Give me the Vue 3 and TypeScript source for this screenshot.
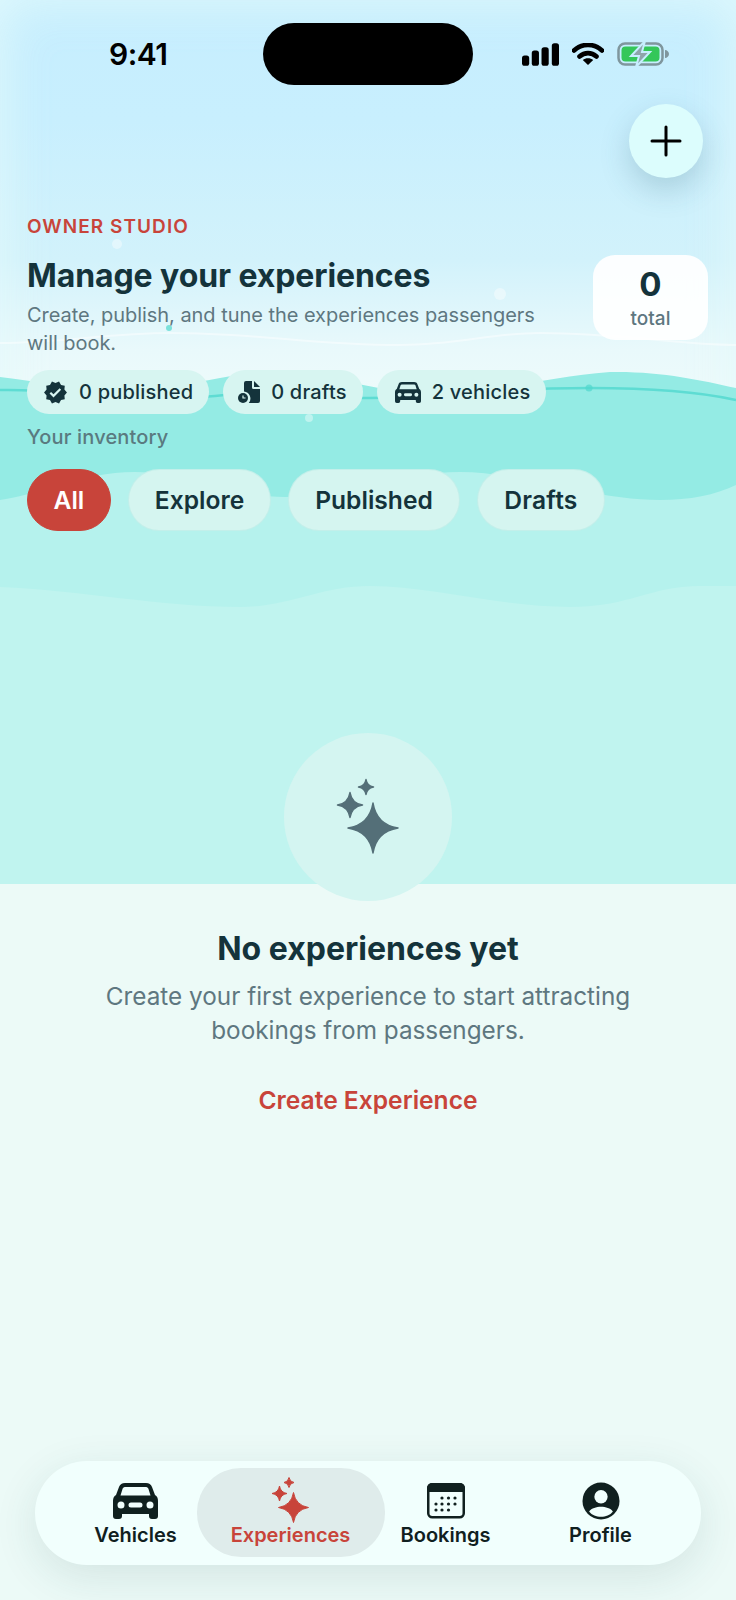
<script setup lang="ts">
interface Chip {
  label: string;
  icon: string;
}

interface Tab {
  label: string;
  icon: string;
  active?: boolean;
}

const chips: Chip[] = [
  { label: '0 published', icon: 'verified' },
  { label: '0 drafts', icon: 'draft' },
  { label: '2 vehicles', icon: 'car' },
];

const filters = ['All', 'Explore', 'Published', 'Drafts'];

const tabs: Tab[] = [
  { label: 'Vehicles', icon: 'car' },
  { label: 'Experiences', icon: 'sparkles', active: true },
  { label: 'Bookings', icon: 'calendar' },
  { label: 'Profile', icon: 'profile' },
];

const calendarDots: number[][] = [
  [15, 15], [21.5, 15], [28, 15],
  [9, 21], [15, 21], [21.5, 21], [28, 21],
  [9, 27], [15, 27], [21.5, 27],
];

// four pointed star with concave sides
const star = (cx: number, cy: number, r: number): string => {
  const k = r * 0.14;
  return `M${cx} ${cy - r}Q${cx + k} ${cy - k} ${cx + r} ${cy}Q${cx + k} ${cy + k} ${cx} ${cy + r}Q${cx - k} ${cy + k} ${cx - r} ${cy}Q${cx - k} ${cy - k} ${cx} ${cy - r}Z`;
};

const carBody = 'M12 0H33C36 0 38 1.5 39 4L42 12C44 13 45 15 45 18V33a3 3 0 0 1-3 3H39a3 3 0 0 1-3-3V31H9v2a3 3 0 0 1-3 3H3a3 3 0 0 1-3-3V18C0 15 1 13 3 12L6 4C7 1.5 9 0 12 0ZM13 4C11 4 10 4.5 9.5 6L7.5 12.500H37.500L35.500 6C35 4.500 34 4 32 4ZM8 18.500a3.500 3.500 0 1 0 0 7a3.500 3.500 0 1 0 0-7ZM37 18.500a3.500 3.500 0 1 0 0 7a3.500 3.500 0 1 0 0-7ZM18 19.500a2.500 2.500 0 0 0 0 5H27a2.500 2.500 0 0 0 0-5Z';
</script>

<template>
  <div class="page">
    <div class="hero-bg">
      <div class="sky"></div>
      <svg class="waves" viewBox="0 0 736 884" width="736" height="884">
        <path class="wave-a" d="M0 377C60 385 130 396 220 378C270 368 330 378 400 392C470 402 530 378 610 372C660 371 700 380 736 388V884H0Z" />
        <path class="wave-b" d="M0 500C40 495 80 472 135 472C190 472 230 497 285 497C340 497 400 472 460 472C520 472 590 500 660 500C690 500 715 495 736 485V884H0Z" />
        <path class="wave-c" d="M0 587C80 590 160 607 240 607C290 607 320 586 370 586C430 586 500 607 570 607C630 607 650 586 700 586C715 586 725 586 736 586V884H0Z" />
        <path class="line-white" d="M0 343C60 343 110 333 170 333C260 333 310 345 400 345C460 345 490 333 540 333C620 333 680 345 736 345" />
        <path class="line-teal" d="M0 390C60 388 130 404 215 396C270 390 320 398 370 398C430 398 480 388 590 388C650 388 700 392 736 400" />
        <circle class="dot" cx="117" cy="244" r="5" />
        <circle class="dot" cx="500" cy="294" r="6" />
        <circle class="dot" cx="309" cy="418" r="4" />
        <circle class="dot-teal" cx="169" cy="328" r="3" />
        <circle class="dot-teal" cx="589" cy="388" r="3.5" />
      </svg>
    </div>

    <div class="content">
      <div class="status-bar">
        <span class="time">9:41</span>
        <div class="island"></div>
        <div class="status-icons">
          <svg width="37" height="23" viewBox="0 0 36 22">
            <rect x="0" y="12" width="7" height="10" rx="2.5" />
            <rect x="9.5" y="7" width="7" height="15" rx="2.5" />
            <rect x="19" y="4" width="7" height="18" rx="2.5" />
            <rect x="29" y="0" width="7" height="22" rx="2.5" />
          </svg>
          <svg width="32" height="22" viewBox="0 0 32 22">
            <path d="M2 7.5C10 0 22 0 30 7.5M7.500 13.500C12.500 9 19.500 9 24.500 13.500" fill="none" stroke="#000" stroke-width="4.6" stroke-linecap="round" />
            <path d="M16 22L10.800 17C13.500 14.800 18.500 14.800 21.200 17Z" />
          </svg>
          <svg width="52" height="24" viewBox="0 0 52 24">
            <rect x="1.5" y="1.5" width="44" height="21" rx="6.5" fill="none" stroke="#7f969d" stroke-width="2.5" />
            <path d="M48 8v8c2 0 4-2 4-4s-2-4-4-4z" fill="#7f969d" />
            <rect x="4.5" y="4.5" width="38" height="15" rx="4" fill="#34c759" />
            <path d="M28 -1L14 14H22L19 25L33 10H25Z" fill="#8ea4ab" stroke="#c6eefe" stroke-width="2" />
          </svg>
        </div>
      </div>

      <div class="fab-row">
        <button class="fab">
          <svg width="32" height="32" viewBox="0 0 32 32">
            <path d="M16 2V30M2 16H30" stroke="#000" stroke-width="3" stroke-linecap="round" />
          </svg>
        </button>
      </div>

      <div class="header">
        <div class="eyebrow">OWNER STUDIO</div>
        <div class="title-row">
          <div class="title-text">
            <h1>Manage your experiences</h1>
            <p>Create, publish, and tune the experiences passengers will book.</p>
          </div>
          <div class="total-card">
            <strong>0</strong>
            <span>total</span>
          </div>
        </div>

        <div class="chips">
          <div class="chip" v-for="chip of chips" :key="chip.label">
            <svg v-if="chip.icon === 'verified'" width="25" height="25" viewBox="0 0 24 24">
              <path d="M23 12l-2.44-2.79.34-3.69-3.61-.82-1.89-3.2L12 2.96 8.6 1.5 6.71 4.69 3.1 5.5l.34 3.7L1 12l2.44 2.79-.34 3.7 3.61.82L8.6 22.5l3.4-1.47 3.4 1.46 1.89-3.19 3.61-.82-.34-3.69L23 12zm-12.91 4.72l-3.8-3.81 1.48-1.48 2.32 2.33 5.85-5.87 1.48 1.48-7.33 7.35z" />
            </svg>
            <svg v-else-if="chip.icon === 'draft'" class="icon-draft" width="22" height="22" viewBox="0 0 22 22">
              <path d="M8 0h6v6.500a1.500 1.500 0 0 0 1.500 1.500H22v12a2 2 0 0 1-2 2H10.800A7 7 0 0 0 6 10.600V2a2 2 0 0 1 2-2z" />
              <path d="M16 0l6 6h-6z" />
              <circle cx="5" cy="17" r="5" />
              <path d="M5 14.500V17H7.500" fill="none" stroke="#d7f5f1" stroke-width="1.2" />
            </svg>
            <svg v-else class="icon-car" width="26" height="21" viewBox="0 0 45 36">
              <path :d="carBody" fill-rule="evenodd" />
            </svg>
            <span>{{ chip.label }}</span>
          </div>
        </div>

        <div class="inventory">Your inventory</div>

        <div class="filters">
          <div class="filter" :class="{ active: filter === 'All' }" v-for="filter of filters" :key="filter">
            {{ filter }}
          </div>
        </div>
      </div>

      <div class="empty">
        <div class="empty-circle">
          <svg width="168" height="168" viewBox="0 0 168 168">
            <path :d="star(89, 95, 25)" />
            <path :d="star(66, 72, 12.500)" />
            <path :d="star(82, 54, 7.500)" />
          </svg>
        </div>
        <h2>No experiences yet</h2>
        <p>Create your first experience to start attracting bookings from passengers.</p>
        <div class="create">Create Experience</div>
      </div>
    </div>

    <nav class="tabbar">
      <div class="tab" :class="{ active: tab.active }" v-for="tab of tabs" :key="tab.label">
        <svg v-if="tab.icon === 'car'" width="45" height="36" viewBox="0 0 45 36">
          <path :d="carBody" fill-rule="evenodd" />
        </svg>
        <svg v-else-if="tab.icon === 'sparkles'" width="45" height="36" viewBox="0 0 45 36">
          <path :d="star(25.500, 24.500, 15)" />
          <path :d="star(11.500, 10.500, 7.500)" />
          <path :d="star(21, -0.500, 5)" />
        </svg>
        <svg v-else-if="tab.icon === 'calendar'" width="38" height="36" viewBox="0 0 38 36">
          <rect x="1.25" y="1.25" width="35.500" height="33" rx="4" fill="#f1fffd" stroke="#10201f" stroke-width="2.5" />
          <path d="M5 0H33a5 5 0 0 1 5 5V9H0V5a5 5 0 0 1 5-5Z" />
          <circle v-for="dot of calendarDots" :key="dot.join()" :cx="dot[0]" :cy="dot[1]" r="1.6" />
        </svg>
        <svg v-else width="40" height="40" viewBox="0 0 40 40">
          <circle cx="20" cy="20" r="19.500" />
          <circle cx="20" cy="15.500" r="7" fill="#f1fffd" />
          <path d="M7.500 31C10 27.500 15 26 20 26C25 26 30 27.500 32.500 31C29.500 35 25 36.500 20 36.500C15 36.500 10.500 35 7.500 31Z" fill="#f1fffd" />
        </svg>
        <span>{{ tab.label }}</span>
      </div>
    </nav>
  </div>
</template>

<style scoped>
.page {
  position: relative;
  width: 736px;
  height: 1600px;
  overflow: hidden;
  background-color: #ecfaf7;
  font-family: Inter, "Liberation Sans", sans-serif;
  color: #14333b;
}

.hero-bg {
  position: absolute;
  top: 0;
  left: 0;
  width: 736px;
  height: 884px;
  overflow: hidden;
}

.sky {
  position: absolute;
  inset: 0 0 -80px 0;
  background: linear-gradient(180deg, #c6eefe 0, #c8effe 120px, #d2f2fb 260px, #e9f9fb 350px, #eefbfb 400px);
  box-shadow: inset 0 0 50px 2px rgba(228, 250, 252, 0.85);
}

.waves {
  position: absolute;
  top: 0;
  left: 0;
}

.wave-a { fill: #94ebe4; }
.wave-b { fill: #b5f2ed; }
.wave-c { fill: #c0f4ef; }
.line-white { fill: none; stroke: rgba(255, 255, 255, 0.45); stroke-width: 2; }
.line-teal { fill: none; stroke: #5edcd3; stroke-width: 2.5; }
.dot { fill: rgba(255, 255, 255, 0.4); }
.dot-teal { fill: rgba(80, 215, 205, 0.7); }

.content {
  position: relative;
  display: flex;
  flex-direction: column;
}

.status-bar {
  display: flex;
  align-items: center;
  height: 62px;
  padding: 23px 0 19px;
}

.time {
  width: 263px;
  padding-left: 109px;
  box-sizing: border-box;
  font-size: 30px;
  font-weight: 600;
  letter-spacing: -0.5px;
  color: #000;
}

.island {
  width: 210px;
  height: 62px;
  border-radius: 31px;
  background-color: #000;
}

.status-icons {
  display: flex;
  align-items: center;
  gap: 13px;
  margin-left: 49px;
}

.fab-row {
  display: flex;
  justify-content: flex-end;
  padding-right: 33px;
}

.fab {
  display: flex;
  align-items: center;
  justify-content: center;
  width: 74px;
  height: 74px;
  padding: 0;
  border: 0;
  border-radius: 50%;
  background-color: #dcfdfd;
  box-shadow: 0 12px 30px rgba(40, 90, 110, 0.22);
}

.header {
  padding: 37px 27px 0;
}

.eyebrow {
  font-size: 19px;
  line-height: 24px;
  font-weight: 600;
  letter-spacing: 1.05px;
  color: #c8443a;
}

.title-row {
  display: flex;
  justify-content: space-between;
  margin-top: 15px;
}

.title-text {
  width: 520px;
}

h1 {
  margin: 0;
  font-size: 32px;
  line-height: 44px;
  font-weight: 700;
  letter-spacing: -0.1px;
}

.title-text p {
  margin: 3px 0 0;
  font-size: 20px;
  line-height: 28px;
  letter-spacing: -0.04px;
  color: #5e7780;
}

.total-card {
  display: flex;
  flex-direction: column;
  align-items: center;
  justify-content: center;
  width: 115px;
  height: 85px;
  margin: 1px 1px 0 0;
  border-radius: 22px;
  background-color: rgba(255, 255, 255, 0.92);
}

.total-card strong {
  font-size: 33px;
  line-height: 40px;
  font-weight: 700;
}

.total-card span {
  margin-top: 3px;
  font-size: 19px;
  line-height: 24px;
  font-weight: 500;
  color: #5e7780;
}

.chips {
  display: flex;
  gap: 14px;
  margin-top: 13px;
}

.chip {
  display: flex;
  align-items: center;
  gap: 11px;
  height: 44px;
  padding: 0 16px;
  border-radius: 22px;
  background-color: #d7f5f1;
  font-size: 20px;
  font-weight: 500;
  letter-spacing: 0.2px;
  fill: #14333b;
}

.icon-draft {
  margin-left: -1px;
}

.icon-car {
  margin-left: 2px;
}

.inventory {
  margin-top: 10px;
  font-size: 20px;
  line-height: 26px;
  font-weight: 500;
  letter-spacing: 0.15px;
  color: #5a7a80;
}

.filters {
  display: flex;
  gap: 17px;
  margin-top: 19px;
}

.filter {
  display: flex;
  align-items: center;
  height: 62px;
  box-sizing: border-box;
  padding: 0 26px;
  border: 1px solid rgba(190, 238, 232, 0.8);
  border-radius: 31px;
  background-color: #d5f5f0;
  font-size: 24.6px;
  font-weight: 600;
}

.filter:first-child {
  padding: 0 25.5px;
}

.filter:last-child {
  padding: 0 26.5px;
  letter-spacing: 0.2px;
}

.filter.active {
  border-color: #c8443a;
  background-color: #c8443a;
  color: #fff;
}

.empty {
  display: flex;
  flex-direction: column;
  align-items: center;
  margin-top: 202px;
  text-align: center;
}

.empty-circle {
  width: 168px;
  height: 168px;
  border-radius: 50%;
  background-color: #d4f5f1;
  fill: #546f78;
  stroke: #546f78;
  stroke-width: 1.5;
  stroke-linejoin: round;
}

h2 {
  margin: 28px 0 0;
  font-size: 32px;
  line-height: 40px;
  font-weight: 700;
}

.empty p {
  width: 560px;
  margin: 10px 0 0;
  font-size: 24.3px;
  line-height: 34px;
  color: #5e7780;
}

.create {
  margin-top: 37px;
  font-size: 24.6px;
  line-height: 32px;
  font-weight: 600;
  color: #c8443a;
}

.tabbar {
  position: absolute;
  left: 35px;
  top: 1461px;
  display: grid;
  grid-template-columns: repeat(4, 155px);
  justify-content: center;
  width: 666px;
  height: 104px;
  border-radius: 52px;
  background-color: #f1fffd;
  box-shadow: 0 12px 44px rgba(30, 80, 80, 0.12);
}

.tab {
  position: relative;
  display: flex;
  flex-direction: column;
  align-items: center;
  justify-content: flex-start;
  padding-top: 21px;
  font-size: 20px;
  line-height: 26px;
  font-weight: 600;
  color: #10201f;
  fill: #10201f;
}

.tab svg {
  height: 38px;
  position: relative;
  overflow: visible;
}

.tab span {
  position: relative;
  margin-top: 2px;
  white-space: nowrap;
}

.tab.active {
  color: #c8443a;
  fill: #c8443a;
  stroke-linejoin: round;
}

.tab.active svg {
  stroke: #c8443a;
  stroke-width: 1;
}

.tab.active::before {
  content: "";
  position: absolute;
  top: 7px;
  bottom: 8px;
  left: -16px;
  right: -17px;
  border-radius: 44px;
  background-color: #dfeceb;
}
</style>

<style>
body {
  margin: 0;
}
</style>
